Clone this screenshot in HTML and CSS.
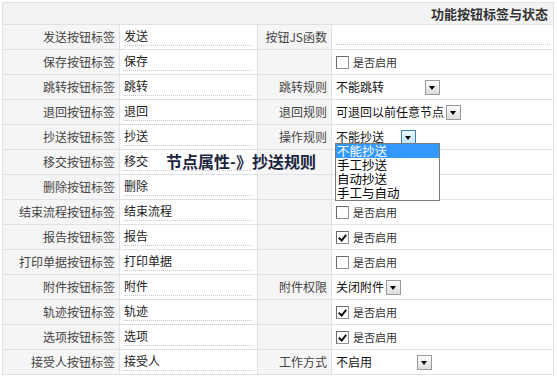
FILE: index.html
```html
<!DOCTYPE html>
<html lang="zh-cn">
<head>
<meta charset="UTF-8" />
<title>功能按钮标签与状态</title>
<link rel="stylesheet" href="styles.css">
</head>
<body>
  <table class="btn-table">
    <colgroup>
      <col class="c-label" />
      <col class="c-value" />
      <col class="c-label2" />
      <col class="c-value2" />
    </colgroup>
    <tr class="head-row">
      <th colspan="4">功能按钮标签与状态</th>
    </tr>
    <tr>
      <td class="lbl">发送按钮标签</td>
      <td><span class="txt">发送</span></td>
      <td class="lbl">按钮JS函数</td>
      <td><span class="txt wide"></span></td>
    </tr>
    <tr>
      <td class="lbl">保存按钮标签</td>
      <td><span class="txt">保存</span></td>
      <td class="lbl"></td>
      <td><label class="chk"><span class="box"></span>是否启用</label></td>
    </tr>
    <tr>
      <td class="lbl">跳转按钮标签</td>
      <td><span class="txt">跳转</span></td>
      <td class="lbl">跳转规则</td>
      <td><span class="sel w-jump">不能跳转<span class="arrow"></span></span></td>
    </tr>
    <tr>
      <td class="lbl">退回按钮标签</td>
      <td><span class="txt">退回</span></td>
      <td class="lbl">退回规则</td>
      <td><span class="sel">可退回以前任意节点<span class="arrow"></span></span></td>
    </tr>
    <tr>
      <td class="lbl">抄送按钮标签</td>
      <td><span class="txt">抄送</span></td>
      <td class="lbl">操作规则</td>
      <td class="drop-cell">
        <span class="sel w-cc">不能抄送<span class="arrow on"></span></span>
        <ul class="drop-list">
          <li class="active">不能抄送</li>
          <li>手工抄送</li>
          <li>自动抄送</li>
          <li>手工与自动</li>
        </ul>
      </td>
    </tr>
    <tr>
      <td class="lbl">移交按钮标签</td>
      <td class="note-cell"><span class="txt">移交</span><span class="note">节点属性-》抄送规则</span></td>
      <td class="lbl"></td>
      <td></td>
    </tr>
    <tr>
      <td class="lbl">删除按钮标签</td>
      <td><span class="txt">删除</span></td>
      <td class="lbl"></td>
      <td></td>
    </tr>
    <tr>
      <td class="lbl">结束流程按钮标签</td>
      <td><span class="txt">结束流程</span></td>
      <td class="lbl"></td>
      <td><label class="chk"><span class="box"></span>是否启用</label></td>
    </tr>
    <tr>
      <td class="lbl">报告按钮标签</td>
      <td><span class="txt">报告</span></td>
      <td class="lbl"></td>
      <td><label class="chk"><span class="box checked"></span>是否启用</label></td>
    </tr>
    <tr>
      <td class="lbl">打印单据按钮标签</td>
      <td><span class="txt">打印单据</span></td>
      <td class="lbl"></td>
      <td><label class="chk"><span class="box"></span>是否启用</label></td>
    </tr>
    <tr>
      <td class="lbl">附件按钮标签</td>
      <td><span class="txt">附件</span></td>
      <td class="lbl">附件权限</td>
      <td><span class="sel">关闭附件<span class="arrow"></span></span></td>
    </tr>
    <tr>
      <td class="lbl">轨迹按钮标签</td>
      <td><span class="txt">轨迹</span></td>
      <td class="lbl"></td>
      <td><label class="chk"><span class="box checked"></span>是否启用</label></td>
    </tr>
    <tr>
      <td class="lbl">选项按钮标签</td>
      <td><span class="txt">选项</span></td>
      <td class="lbl"></td>
      <td><label class="chk"><span class="box checked"></span>是否启用</label></td>
    </tr>
    <tr>
      <td class="lbl">接受人按钮标签</td>
      <td><span class="txt">接受人</span></td>
      <td class="lbl">工作方式</td>
      <td><span class="sel w-work">不启用<span class="arrow"></span></span></td>
    </tr>
  </table>
</body>
</html>
```

FILE: styles.css
```css
body {
  margin: 0;
  padding: 2px 0 0 2px;
  background: #fff;
  font-family: "Noto Sans CJK SC", "Noto Sans", sans-serif;
  font-size: 12px;
  color: #222;
}
.btn-table {
  width: 552px;
  border-collapse: collapse;
  table-layout: fixed;
}
.c-label { width: 117px; }
.c-value { width: 138px; }
.c-label2 { width: 74px; }
.btn-table td,
.btn-table th {
  border: 1px solid #dde2e8;
  height: 24px;
  padding: 0 4px;
  white-space: nowrap;
  line-height: 16px;
}
.head-row th {
  height: 21px;
  background: #f3f3f3;
  text-align: right;
  font-size: 13px;
  font-weight: 700;
  color: #333;
  padding-right: 5px;
}
.btn-table td.lbl {
  background: #f5f5f5;
  text-align: right;
  color: #444;
  padding-right: 4px;
}
.txt {
  display: inline-block;
  width: 128px;
  height: 17px;
  border-bottom: 1px dotted #c8c8c8;
  color: #222;
}
.txt.wide {
  width: 214px;
}
.chk {
  display: flex;
  align-items: center;
  gap: 4px;
  font-size: 11px;
  color: #333;
}
.box {
  position: relative;
  width: 11px;
  height: 11px;
  border: 1px solid #8e8f8f;
  border-top-color: #6b6b6b;
  border-left-color: #6b6b6b;
  background: #fff;
}
.box.checked::after {
  content: "";
  position: absolute;
  left: 3px;
  top: 1px;
  width: 3px;
  height: 6px;
  border: solid #111;
  border-width: 0 2px 2px 0;
  transform: rotate(40deg);
}
.sel {
  display: inline-flex;
  align-items: center;
  gap: 2px;
  font-size: 12px;
  color: #111;
}
.w-jump { width: 104px; justify-content: space-between; }
.w-cc { width: 80px; justify-content: space-between; }
.w-work { width: 96px; justify-content: space-between; }
.arrow {
  position: relative;
  width: 13px;
  height: 13px;
  border: 1px solid #9a9a9a;
  background: linear-gradient(#fdfdfd, #dcdcdc);
}
.arrow::after {
  content: "";
  position: absolute;
  left: 3px;
  top: 5px;
  border-left: 3.5px solid transparent;
  border-right: 3.5px solid transparent;
  border-top: 4px solid #000;
}
.arrow.on {
  border-color: #3c7fb1;
  background: linear-gradient(#eaf6fd, #bee6fd);
}
.drop-cell,
.note-cell {
  position: relative;
}
.drop-list {
  position: absolute;
  left: 3px;
  top: 18px;
  z-index: 2;
  width: 103px;
  margin: 0;
  padding: 0;
  list-style: none;
  background: #fff;
  border: 1px solid #7a7a7a;
  font-size: 12.5px;
  line-height: 14px;
}
.drop-list li {
  padding: 0 1px;
  color: #000;
}
.drop-list li.active {
  background: #3399ff;
  color: #fff;
}
.note {
  position: absolute;
  left: 46px;
  top: 3px;
  z-index: 1;
  font-size: 16px;
  font-weight: 700;
  color: #1b2540;
}
```
